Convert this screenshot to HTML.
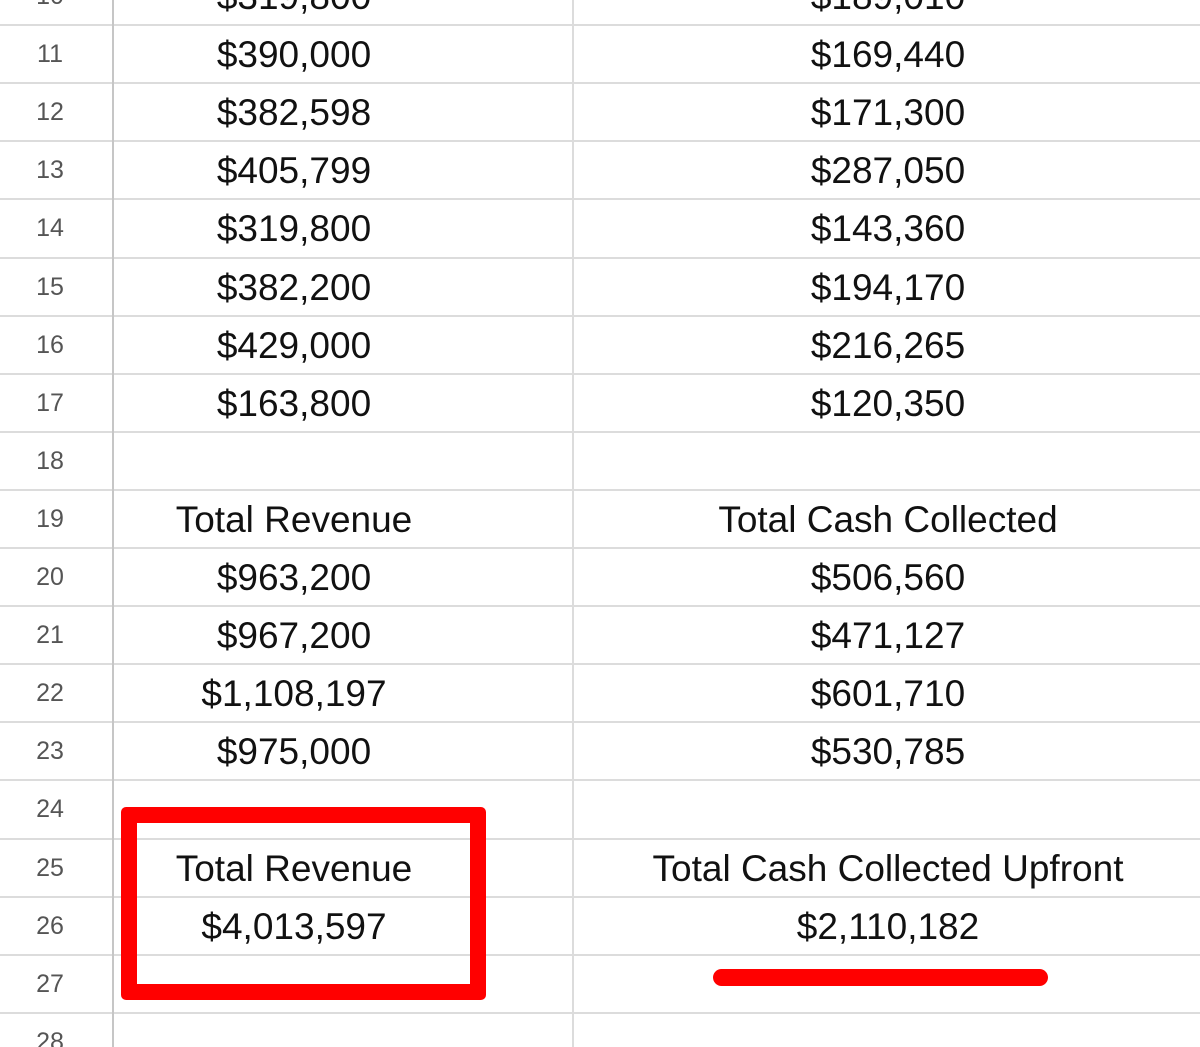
<!DOCTYPE html>
<html><head><meta charset="utf-8"><style>
html,body{margin:0;padding:0;width:1200px;height:1047px;overflow:hidden;background:#fff;}
body{position:relative;font-family:"Liberation Sans",Arial,sans-serif;}
.r{position:absolute;left:0;width:1200px;height:58px;border-top:2px solid #dcdcdc;box-sizing:border-box;}
.n{position:absolute;left:0;width:100px;top:0;height:56px;line-height:56px;text-align:center;font-size:25px;color:#555;}
.b{position:absolute;left:114px;width:360px;top:0;height:58px;line-height:58px;text-align:center;font-size:37px;color:#111;}
.c{position:absolute;left:574px;width:628px;top:0;height:58px;line-height:58px;text-align:center;font-size:37px;color:#111;}
.v1{position:absolute;left:112px;top:0;width:2px;height:1047px;background:#c6c6c6;}
.v2{position:absolute;left:572px;top:0;width:2px;height:1047px;background:#dcdcdc;}
.box{position:absolute;left:121px;top:807px;width:365px;height:193px;border:16px solid #f00;box-sizing:border-box;border-radius:5px;}
.ul{position:absolute;left:713px;top:969px;width:335px;height:17px;background:#f00;border-radius:9px;}
</style></head><body>
<div class="r" style="top:-34px"><div class="n">10</div><div class="b">$319,800</div><div class="c">$189,010</div></div>
<div class="r" style="top:24px"><div class="n">11</div><div class="b">$390,000</div><div class="c">$169,440</div></div>
<div class="r" style="top:82px"><div class="n">12</div><div class="b">$382,598</div><div class="c">$171,300</div></div>
<div class="r" style="top:140px"><div class="n">13</div><div class="b">$405,799</div><div class="c">$287,050</div></div>
<div class="r" style="top:198px"><div class="n">14</div><div class="b">$319,800</div><div class="c">$143,360</div></div>
<div class="r" style="top:257px"><div class="n">15</div><div class="b">$382,200</div><div class="c">$194,170</div></div>
<div class="r" style="top:315px"><div class="n">16</div><div class="b">$429,000</div><div class="c">$216,265</div></div>
<div class="r" style="top:373px"><div class="n">17</div><div class="b">$163,800</div><div class="c">$120,350</div></div>
<div class="r" style="top:431px"><div class="n">18</div></div>
<div class="r" style="top:489px"><div class="n">19</div><div class="b">Total Revenue</div><div class="c">Total Cash Collected</div></div>
<div class="r" style="top:547px"><div class="n">20</div><div class="b">$963,200</div><div class="c">$506,560</div></div>
<div class="r" style="top:605px"><div class="n">21</div><div class="b">$967,200</div><div class="c">$471,127</div></div>
<div class="r" style="top:663px"><div class="n">22</div><div class="b">$1,108,197</div><div class="c">$601,710</div></div>
<div class="r" style="top:721px"><div class="n">23</div><div class="b">$975,000</div><div class="c">$530,785</div></div>
<div class="r" style="top:779px"><div class="n">24</div></div>
<div class="r" style="top:838px"><div class="n">25</div><div class="b">Total Revenue</div><div class="c">Total Cash Collected Upfront</div></div>
<div class="r" style="top:896px"><div class="n">26</div><div class="b">$4,013,597</div><div class="c">$2,110,182</div></div>
<div class="r" style="top:954px"><div class="n">27</div></div>
<div class="r" style="top:1012px"><div class="n">28</div></div>
<div class="v1"></div><div class="v2"></div>
<div class="box"></div>
<div class="ul"></div>
</body></html>
